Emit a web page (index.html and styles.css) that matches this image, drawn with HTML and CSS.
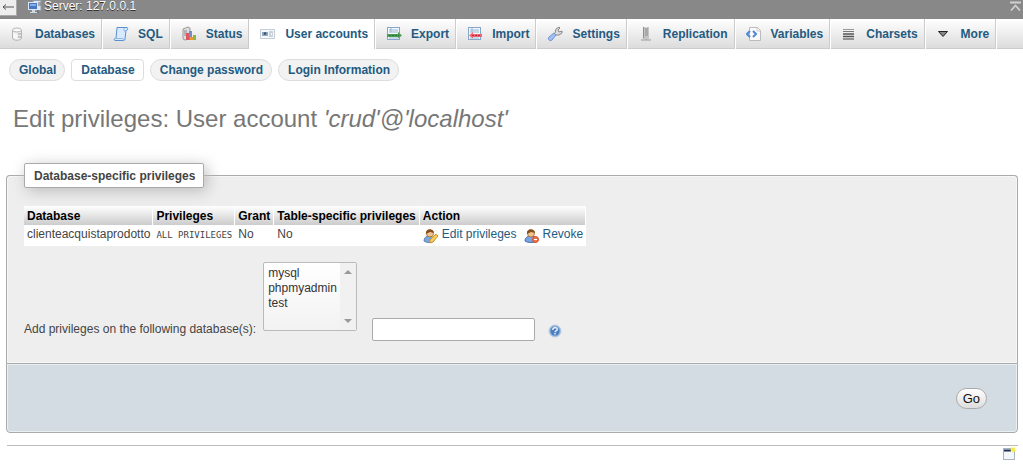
FILE: index.html
```html
<!DOCTYPE html>
<html lang="en">
<head>
<meta charset="utf-8">
<title>Edit privileges</title>
<link rel="stylesheet" href="styles.css">
</head>
<body>
<header class="serverbar">
  <button class="nav-toggle" aria-label="Hide panel"><svg width="12" height="8" viewBox="0 0 12 8"><path d="M12 4H1M4 1.500L1 4l3 2.500" fill="none" stroke="#555"/></svg></button>
  <a class="server" href="#"><svg width="14" height="14" viewBox="0 0 14 14"><rect x="5" y=".5" width="8" height="10" fill="#dfe5ea" stroke="#8c9aaa"/><path d="M10 3h3M10 5h3M10 10v3" stroke="#667"/><rect x=".5" y="2.500" width="9" height="7" fill="#4577c4" stroke="#dce7f3"/><path d="M2 4h6v2H2z" fill="#83adeb"/><path d="M4 10h3v2h2v1H2v-1h2z" fill="#cfd8e2"/></svg>Server: 127.0.0.1</a>
  <a class="to-top" href="#" aria-label="Scroll to top"><svg width="12" height="10" viewBox="0 0 12 10"><path d="M0 1.500h11M1 9.500L5.500 4.500 10 9.500" fill="none" stroke="#d0d0d0" stroke-width="1.800"/></svg></a>
</header>
<nav class="tabs">
  <a href="#"><svg viewBox="0 0 16 16"><path d="M2.500 4v8c0 3 9 3 9 0V4" fill="#eee" stroke="#b5b5b5"/><ellipse cx="7" cy="4" rx="4.500" ry="2" fill="#fafafa" stroke="#b5b5b5"/><path d="M4 7v5M6 8v5" stroke="#fff"/><path d="M8 8h3M8 11h3" stroke="#999"/></svg>Databases</a>
  <a href="#"><svg viewBox="0 0 16 16"><path d="M4 1.500h10c1 0 1 3-1 3l-1 8c0 2-1 2-2 2H2c-1 0-1-2 0-2h1z" fill="#d9eaff" stroke="#5b8fcf"/><path d="M11 2v3h2M2 12.500h8l1 2" fill="none" stroke="#8fb7e8"/></svg>SQL</a>
  <a href="#"><svg viewBox="0 0 16 16"><path d="M2 3l5-2 2 1v11l-5 1-2-1z" fill="#ddd" stroke="#999"/><path d="M3 5h3M3 7h3M3 9h3" stroke="#888"/><path d="M5 7h3v7H5z" fill="#dc5963"/><path d="M8 5h3v9H8z" fill="#6f91c8"/><path d="M12 9h3v5h-3z" fill="#8fb543"/><path d="M9 11h3v3H9z" fill="#e99a3b"/></svg>Status</a>
  <a href="#" class="active"><svg viewBox="0 0 16 16"><rect x=".5" y="3.500" width="14" height="9" fill="#f5f8fb" stroke="#c3ced8"/><rect x="2" y="6" width="6" height="4" fill="#8fa5c0"/><circle cx="5" cy="7.500" r="1.300" fill="#344b6b"/><path d="M9 6h4M9 8h2M12 8h1M9 10h4" stroke="#9eacba"/></svg>User accounts</a>
  <a href="#"><svg viewBox="0 0 16 16"><rect x="1.500" y="1.500" width="12" height="12" fill="#f2f7fc" stroke="#86a7c8"/><path d="M3 4h9M3 6h9M3 12h9M5 2v4" stroke="#9ab9d4"/><path d="M1 8h11V6l4 3.500-4 3V11H1z" fill="#4d9e54"/><path d="M3 9.500h10" stroke="#28763c" stroke-dasharray="2 1"/></svg>Export</a>
  <a href="#"><svg viewBox="0 0 16 16"><rect x="1.500" y="1.500" width="12" height="12" fill="#f2f7fc" stroke="#86a7c8"/><path d="M3 4h9M3 6h9M3 12h9M5 2v4" stroke="#9ab9d4"/><path d="M15 8H6V6L2 9.500l4 3V11h9z" fill="#ef6670"/><path d="M5 9.500h9" stroke="#b52e42" stroke-dasharray="2 1"/></svg>Import</a>
  <a href="#"><svg viewBox="0 0 16 16"><path d="M8 7l1-4 3-2 1 1-2 2 1 2 3-1v2l-3 2-3 0-1 1" fill="#ddd" stroke="#888"/><path d="M2 11l5-4 2 2-4 5c-2 2-5-1-3-3z" fill="#a2bff1" stroke="#6f92d3"/></svg>Settings</a>
  <a href="#"><svg viewBox="0 0 16 16"><path d="M5 1h2l1 1 1-1h2v12H9v1H7v-1H5z" fill="#c4c4c4"/><path d="M5.500 1v11M7 3h3M7 5h3M7 7h3M7 9h3" stroke="#8d8d8d"/><path d="M3 14h10" stroke="#999"/></svg>Replication</a>
  <a href="#"><svg viewBox="0 0 16 16"><path d="M3.500 1.500h8l3 3v10h-11z" fill="#fafafa" stroke="#bbb"/><path d="M11 2v3h3" fill="none" stroke="#ccc"/><path d="M4 5L1 8l3 3M7 5l3 3-3 3" fill="none" stroke="#5087d2" stroke-width="2"/></svg>Variables</a>
  <a href="#"><svg viewBox="0 0 16 16"><path d="M2 3.500h11" stroke="#999"/><path d="M2 5.500h11" stroke="#777"/><path d="M2 8h11M2 10.500h11" stroke="#555" stroke-width="1.500"/><path d="M2 13h11" stroke="#777" stroke-width="1.500"/></svg>Charsets</a>
  <a href="#"><svg viewBox="0 0 16 16"><path d="M2.500 5.500h9L7 10.500z" fill="#888" stroke="#222"/></svg>More</a>
</nav>
<nav class="subtabs">
  <a href="#">Global</a>
  <a href="#" class="active">Database</a>
  <a href="#">Change password</a>
  <a href="#">Login Information</a>
</nav>
<main>
  <h2>Edit privileges: User account <i>'crud'@'localhost'</i></h2>
  <form>
    <fieldset class="panel">
      <legend>Database-specific privileges</legend>
      <table>
        <thead><tr><th>Database</th><th>Privileges</th><th>Grant</th><th>Table-specific privileges</th><th>Action</th></tr></thead>
        <tbody><tr>
          <td>clienteacquistaprodotto</td><td><code>ALL PRIVILEGES</code></td><td>No</td><td>No</td>
          <td><div class="actions">
            <a href="#"><svg viewBox="0 0 16 16"><path d="M1 13c0-3 2-5 5-5s5 2 5 5c-3 2-7 2-10 0z" fill="#7ba7df" stroke="#5f80ab"/><circle cx="7" cy="5.500" r="3.500" fill="#f2c391" stroke="#b07a3f"/><path d="M3 6c-1-6 8-6 8-1L7 4z" fill="#83501e"/><path d="M7 12l6-6 2 2-5 6-3 1z" fill="#f6cc55" stroke="#c99536"/></svg>Edit privileges</a>
            <a href="#"><svg viewBox="0 0 16 16"><path d="M1 13c0-3 2-5 6-5s6 2 6 5c-3 2-9 2-12 0z" fill="#76a5e4" stroke="#4a6fa5"/><circle cx="7" cy="5.500" r="3.500" fill="#f2c391" stroke="#b07a3f"/><path d="M3 6c-1-6 8-6 8-1L7 4z" fill="#83501e"/><circle cx="11.500" cy="11.500" r="3" fill="#f0764a" stroke="#cf4a22"/><path d="M10 11.500h3" stroke="#fff"/></svg>Revoke</a>
          </div></td>
        </tr></tbody>
      </table>
      <div class="add-row">
        <label for="dbs">Add privileges on the following database(s):</label>
        <span class="listbox">
          <select id="dbs" multiple size="4"><option>mysql</option><option>phpmyadmin</option><option>test</option></select>
          <span class="track"><svg width="8" height="5" viewBox="0 0 8 5"><path d="M0 5l4-4 4 4z" fill="#999"/></svg><svg width="8" height="5" viewBox="0 0 8 5"><path d="M0 0l4 4 4-4z" fill="#999"/></svg></span>
        </span>
        <input class="dbname" type="text" aria-label="Database name">
        <a class="help" href="#" aria-label="Documentation"><svg width="14" height="14" viewBox="0 0 14 14"><circle cx="7" cy="7" r="6" fill="#8fb2dc" stroke="#b9cbe2"/><circle cx="7" cy="7" r="4.500" fill="#4c7fbd"/><path d="M4.800 6c0-3.500 4.800-3 4.400-.3C9 7 7 6.800 7 8.300M7 9v1.500" fill="none" stroke="#e4eefa" stroke-width="1.500"/></svg></a>
      </div>
    </fieldset>
    <div class="footer"><button type="submit">Go</button></div>
  </form>
  <div class="page-end"><a href="#" aria-label="Open new window"><svg width="14" height="14" viewBox="0 0 14 14"><rect x="1.500" y="1.500" width="11" height="11" fill="#f3f6fb" stroke="#a8b3c2"/><path d="M2 3.500h7" stroke="#172f59" stroke-width="2"/><path d="M9 0l2 1 2-1v2l1 2-2 1-1 1-1-2-2-1 1-1z" fill="#f7e94c"/></svg></a></div>
</main>
</body>
</html>
```
FILE: styles.css
```css
* { box-sizing: border-box; }
body { margin: 0; background: #fff; color: #444; font: 12px/16px "Liberation Sans", Arial, sans-serif; }
a { color: #235a81; text-decoration: none; }
svg { display: block; flex: none; }
.serverbar { display: flex; align-items: flex-start; height: 19px; background: #888; }
.nav-toggle { display: flex; align-items: center; justify-content: center; width: 17px; height: 16px; padding: 0 0 2px; border: 0; border-right: 1px solid #aaa; border-bottom: 1px solid #aaa; background: #eee; }
.server { display: flex; align-items: flex-start; gap: 2px; margin-left: 11px; color: #fff; line-height: 13px; text-shadow: 0 1px 0 #333; }
.to-top { margin: 1px 1px 0 auto; }
.tabs { display: flex; height: 30px; background: linear-gradient(#fff, #dcdcdc); border-bottom: 1px solid #ccc; white-space: nowrap; }
.tabs a { display: flex; align-items: center; gap: 9px; height: 30px; padding: 0 7px 0 10px; border-right: 1px solid #fff; box-shadow: inset -1px 0 #ccc; font-weight: bold; }
.tabs svg { width: 16px; height: 16px; }
.tabs .active { background: #fff; }
.subtabs { display: flex; gap: 6px; padding: 10px 9px; white-space: nowrap; }
.subtabs a { height: 22px; padding: 0 8px 0 9px; border: 1px solid #ddd; border-radius: 20px; background: #f2f2f2; font-weight: bold; line-height: 20px; }
.subtabs .active { border-radius: 4px; background: #fff; }
main { padding: 0 5px 0 6px; }
h2 { margin: 12px 7px 28px; color: #777; font-size: 24px; font-weight: normal; line-height: 32px; }
.panel { min-width: 0; margin: 0; padding: 18px 17px 22px; border: 1px solid #aaa; border-bottom: 0; border-radius: 4px 4px 0 0; background: #eee; box-shadow: inset 0 0 0 1px #fff8; }
legend { padding: 4px 8px 3px 9px; border: 1px solid #aaa; border-radius: 2px; background: #fff; box-shadow: 3px 3px 15px #bbb; font-weight: bold; line-height: 16px; }
table { border-spacing: 0; background: #fff; }
th { height: 19px; padding: 1px 3px; border-right: 1px solid #fff; background: linear-gradient(#fff, #ccc); color: #000; text-align: left; line-height: 16px; }
td { height: 21px; padding: 1px 3px; vertical-align: top; }
code { font: 9px "DejaVu Sans Mono", monospace; }
.actions { display: flex; gap: 7px; }
.actions a { display: flex; align-items: flex-start; gap: 3px; }
.actions svg { width: 16px; height: 16px; margin-top: 2px; }
.add-row { display: flex; align-items: flex-end; margin-top: 16px; }
.add-row label { margin-bottom: 4px; }
.listbox { position: relative; margin: 0 15px 10px 7px; }
.listbox select { display: block; width: 94px; height: 69px; padding: 3px 0; overflow: hidden; border: 1px solid #bbb; border-radius: 2px; background: linear-gradient(#fff, #f2f2f2); color: #333; font: 12px "Liberation Sans", Arial, sans-serif; outline: 0; }
.listbox option { min-height: 15px; padding: 0 4px; line-height: 15px; }
.track { position: absolute; inset: 1px 1px 1px auto; display: flex; flex-direction: column; justify-content: space-between; align-items: center; width: 16px; padding: 6px 0; background: #f1f1f1; }
.dbname { width: 163px; height: 23px; padding: 2px 4px; border: 1px solid #aaa; border-radius: 2px; background: #fff; }
.help { margin: 0 0 3px 13px; }
.footer { display: flex; justify-content: flex-end; padding: 24px 30px 23px 17px; border: 1px solid #aaa; border-radius: 0 0 4px 4px; background: #d3dce3; box-shadow: inset 0 0 0 1px #fff8; }
.footer button { height: 21px; padding: 0 6px; border: 1px solid #aaa; border-radius: 12px; background: linear-gradient(#fff, #ddd); color: #111; font: 13px "Liberation Sans", Arial, sans-serif; }
.page-end { display: flex; justify-content: flex-end; margin: 12px 0 0 1px; padding: 1px 2px 0 0; border-top: 1px solid #bbb; }
```
